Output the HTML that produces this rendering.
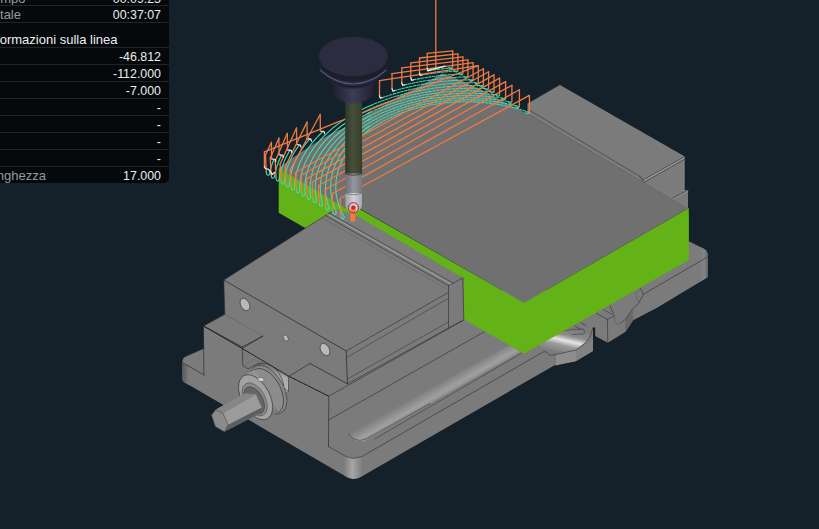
<!DOCTYPE html>
<html lang="it"><head><meta charset="utf-8"><title>Simulazione</title>
<style>
html,body{margin:0;padding:0;background:#14212b;overflow:hidden;}
body{width:819px;height:529px;position:relative;font-family:"Liberation Sans",sans-serif;}
svg{position:absolute;left:0;top:0;}
.panel{position:absolute;left:0;top:0;width:169px;height:183px;background:#05090c;border-bottom-right-radius:5px;overflow:hidden;font-size:12.4px;color:#ececec;}
.row{position:absolute;left:0;width:169px;height:17px;border-top:1px solid #1f2529;box-sizing:border-box;}
.row .l{position:absolute;right:0;top:2px;line-height:14px;color:#9b9b9b;white-space:nowrap;font-size:13px;}
.row .v{position:absolute;right:8px;top:2px;line-height:14px;white-space:nowrap;}
.hd{position:absolute;top:33px;line-height:14px;white-space:nowrap;color:#f0f0f0;font-size:13px;}
</style></head><body>
<svg width="819" height="529" viewBox="0 0 819 529">
<defs>
<linearGradient id="shank" x1="0" x2="1" y1="0" y2="0"><stop offset="0" stop-color="#2f3828"/><stop offset="0.45" stop-color="#465039"/><stop offset="1" stop-color="#353e2c"/></linearGradient>
<linearGradient id="cut1" x1="0" x2="1" y1="0" y2="0"><stop offset="0" stop-color="#6e6e74"/><stop offset="0.5" stop-color="#95959c"/><stop offset="1" stop-color="#77777d"/></linearGradient>
<linearGradient id="cut2" x1="0" x2="1" y1="0" y2="0"><stop offset="0" stop-color="#9a9aa2"/><stop offset="0.5" stop-color="#d0d0d8"/><stop offset="1" stop-color="#a8a8b0"/></linearGradient>
<linearGradient id="neck" x1="0" x2="1" y1="0" y2="0"><stop offset="0" stop-color="#1f2030"/><stop offset="0.5" stop-color="#3c3d58"/><stop offset="1" stop-color="#222334"/></linearGradient>
<linearGradient id="hl" gradientUnits="userSpaceOnUse" x1="425.6" y1="389.8" x2="434.4" y2="405.2"><stop offset="0" stop-color="#7b7b7b"/><stop offset="0.6" stop-color="#a0a0a0"/><stop offset="1" stop-color="#7b7b7b"/></linearGradient>
<linearGradient id="rlobe" x1="0" x2="1" y1="0" y2="0"><stop offset="0" stop-color="#7b7b7b"/><stop offset="0.55" stop-color="#848484"/><stop offset="1" stop-color="#666666"/></linearGradient>
<linearGradient id="lobehl" gradientUnits="userSpaceOnUse" x1="570" y1="328" x2="564" y2="354"><stop offset="0" stop-color="#7b7b7b"/><stop offset="0.3" stop-color="#8c8c8c"/><stop offset="0.5" stop-color="#e6e6e6"/><stop offset="0.7" stop-color="#9a9a9a"/><stop offset="1" stop-color="#7b7b7b"/></linearGradient>
<linearGradient id="recess" gradientUnits="userSpaceOnUse" x1="258" y1="368" x2="290" y2="384"><stop offset="0" stop-color="#6a6a6a"/><stop offset="0.6" stop-color="#a0a0a0"/><stop offset="1" stop-color="#b4b4b4"/></linearGradient>
<linearGradient id="collar" gradientUnits="userSpaceOnUse" x1="250" y1="372" x2="276" y2="416"><stop offset="0" stop-color="#8e8e8e"/><stop offset="0.35" stop-color="#a8a8a8"/><stop offset="0.8" stop-color="#8a8a8a"/><stop offset="1" stop-color="#6e6e6e"/></linearGradient>
<linearGradient id="fcorner" gradientUnits="userSpaceOnUse" x1="344" y1="0" x2="362.5" y2="0"><stop offset="0" stop-color="#7b7b7b"/><stop offset="0.45" stop-color="#a6a6a6"/><stop offset="1" stop-color="#7b7b7b"/></linearGradient>
<linearGradient id="lcorner" gradientUnits="userSpaceOnUse" x1="182.4" y1="0" x2="189" y2="0"><stop offset="0" stop-color="#5a5a5a"/><stop offset="1" stop-color="#7b7b7b"/></linearGradient>
</defs>
<polygon points="590.0,300.0 590.0,327.5 595.2,327.5 595.2,336.1 607.8,342.8 625.3,332.0 633.1,320.3 657.5,307.4 707.7,277.2 707.7,253.6 706.5,250.5 703.2,248.4 688.5,241.0 688.5,215.0 600.0,260.0" fill="#7b7b7b" />
<polygon points="625.3,332.0 633.1,320.3 633.1,309.5 626.3,318.3 625.0,323.0" fill="#696969" />
<path d="M700,247 L703.2,248.4 Q707.7,250.5 707.7,256 L707.7,277.2 L700,281.7 Z" fill="url(#rlobe)" />
<polyline points="707.0,257.3 643.4,294.2 640.5,288.3" fill="none" stroke="#2e2e2e" stroke-width="0.6" stroke-linejoin="round" stroke-linecap="round" />
<polyline points="643.4,294.2 639.0,302.6 632.2,309.5 626.3,318.3 620.9,323.2" fill="none" stroke="#2e2e2e" stroke-width="0.6" stroke-linejoin="round" stroke-linecap="round" />
<polyline points="640.5,288.3 636.0,294.0 637.0,300.0 639.0,302.6" fill="none" stroke="#555" stroke-width="0.5" stroke-linejoin="round" stroke-linecap="round" />
<polyline points="607.4,319.3 607.8,342.8" fill="none" stroke="#2e2e2e" stroke-width="0.6" stroke-linejoin="round" stroke-linecap="round" />
<polyline points="596.3,313.4 607.4,319.3 614.5,315.9 610.0,306.0" fill="none" stroke="#2e2e2e" stroke-width="0.6" stroke-linejoin="round" stroke-linecap="round" />
<polyline points="603.2,309.5 612.5,314.7" fill="none" stroke="#2e2e2e" stroke-width="0.5" stroke-linejoin="round" stroke-linecap="round" />
<polyline points="614.5,315.9 614.8,321.0 617.0,324.5 620.9,323.2" fill="none" stroke="#555" stroke-width="0.5" stroke-linejoin="round" stroke-linecap="round" />
<polygon points="224.8,314.3 203.5,326.0 204.0,348.4 186.5,356.0 183.5,358.0 182.4,361.0 182.4,379.4 183.5,382.0 187.0,383.8 345.0,476.0 349.0,478.0 353.8,478.9 358.5,478.0 362.5,476.0 555.0,365.0 575.0,361.0 586.0,355.0 593.0,350.9 593.0,327.3 593.0,295.0 560.0,290.0 460.0,290.0 330.0,290.0" fill="#7b7b7b" />
<polygon points="555.4,354.6 576.0,350.1 576.0,361.2 555.4,365.6" fill="#8e8e8e" />
<polygon points="576.0,350.1 593.0,340.2 593.0,350.9 576.0,361.2" fill="#828282" />
<path d="M538,343 L560,330 L588,327 L592,333 L586,342 L576,349.5 L556,354 L546,353 Z" fill="url(#lobehl)" />
<polyline points="555.4,354.6 576.0,350.1 584.0,344.0 590.0,337.0 593.0,327.3" fill="none" stroke="#2e2e2e" stroke-width="0.55" stroke-linejoin="round" stroke-linecap="round" />
<polyline points="555.4,354.6 555.4,365.6" fill="none" stroke="#666" stroke-width="0.4" stroke-linejoin="round" stroke-linecap="round" />
<polyline points="563.0,331.0 572.0,329.5 583.0,329.0 585.0,331.5 583.5,334.0 572.0,334.5" fill="none" stroke="#2e2e2e" stroke-width="0.5" stroke-linejoin="round" stroke-linecap="round" />
<polyline points="575.0,326.0 580.0,329.0" fill="none" stroke="#2e2e2e" stroke-width="0.6" stroke-linejoin="round" stroke-linecap="round" />
<polyline points="581.0,322.5 586.0,326.0" fill="none" stroke="#2e2e2e" stroke-width="0.6" stroke-linejoin="round" stroke-linecap="round" />
<path d="M344,455.3 L353,458.6 L362.5,456.3 L362.5,476 L358.5,478 L353.75,478.9 L349,478 L344,475.4 Z" fill="url(#fcorner)" />
<path d="M182.4,361 L183,363 L189,366.3 L189,385 L187,383.8 L183.5,382 L182.4,379.4 Z" fill="url(#lcorner)" />
<polygon points="560.0,85.0 684.4,156.2 684.4,190.0 688.0,190.0 688.0,209.0 527.5,113.5 527.5,103.8" fill="#7b7b7b" />
<polyline points="527.5,103.8 560.0,85.0" fill="none" stroke="#6a6a6a" stroke-width="0.4" stroke-linejoin="round" stroke-linecap="round" />
<polyline points="684.2,157.0 684.2,190.0" fill="none" stroke="#9a9a9a" stroke-width="0.5" stroke-linejoin="round" stroke-linecap="round" />
<polyline points="530.0,110.5 640.0,176.5 643.2,180.0 684.0,157.0" fill="none" stroke="#2e2e2e" stroke-width="0.55" stroke-linejoin="round" stroke-linecap="round" />
<polyline points="643.6,181.1 684.0,158.2" fill="none" stroke="#a8a8a8" stroke-width="0.9" stroke-linejoin="round" stroke-linecap="round" />
<polyline points="640.0,176.5 644.2,182.3 684.0,159.5" fill="none" stroke="#2e2e2e" stroke-width="0.55" stroke-linejoin="round" stroke-linecap="round" />
<polyline points="673.0,198.0 688.0,190.0" fill="none" stroke="#2e2e2e" stroke-width="0.6" stroke-linejoin="round" stroke-linecap="round" />
<polyline points="673.5,199.0 688.0,191.0" fill="none" stroke="#a0a0a0" stroke-width="0.6" stroke-linejoin="round" stroke-linecap="round" />
<polygon points="278.7,168.2 356.0,207.0 524.1,302.7 688.8,208.0 688.8,260.0 523.8,353.8 278.7,212.8" fill="#62b218" />
<polygon points="278.7,168.2 292.7,157.7 311.6,145.2 330.5,133.8 345.0,127.5 400.0,96.0 419.6,86.3 442.2,73.5 458.8,79.4 479.8,89.2 510.4,105.3 527.5,113.5 687.7,208.6 524.1,302.7 360.0,208.8 352.0,210.5 346.0,208.4" fill="#707070" />
<polygon points="223.8,280.0 325.4,215.5 336.0,209.5 356.2,215.5 462.5,277.5 463.8,278.2 463.8,320.0 448.5,328.0 347.5,384.0 224.8,314.3" fill="#7b7b7b" />
<polyline points="224.8,314.3 223.8,280.0 325.4,215.5 335.0,210.0" fill="none" stroke="#2e2e2e" stroke-width="0.6" stroke-linejoin="round" stroke-linecap="round" />
<polyline points="223.8,280.0 346.2,351.0 347.5,383.8" fill="none" stroke="#2e2e2e" stroke-width="0.8" stroke-linejoin="round" stroke-linecap="round" />
<polyline points="346.2,351.0 448.8,292.2" fill="none" stroke="#2e2e2e" stroke-width="0.6" stroke-linejoin="round" stroke-linecap="round" />
<polyline points="347.5,383.8 448.5,328.0" fill="none" stroke="#2e2e2e" stroke-width="0.6" stroke-linejoin="round" stroke-linecap="round" />
<polyline points="347.5,357.0 448.8,298.0" fill="none" stroke="#2e2e2e" stroke-width="0.5" stroke-linejoin="round" stroke-linecap="round" />
<polyline points="347.5,379.0 448.5,322.0" fill="none" stroke="#2e2e2e" stroke-width="0.5" stroke-linejoin="round" stroke-linecap="round" />
<polyline points="448.5,285.8 448.5,328.0" fill="none" stroke="#2e2e2e" stroke-width="0.6" stroke-linejoin="round" stroke-linecap="round" />
<polyline points="448.5,285.8 462.8,277.8 463.8,320.0 449.0,327.5" fill="none" stroke="#2e2e2e" stroke-width="0.6" stroke-linejoin="round" stroke-linecap="round" />
<polyline points="325.4,215.5 448.5,285.8" fill="none" stroke="#2e2e2e" stroke-width="0.6" stroke-linejoin="round" stroke-linecap="round" />
<polyline points="327.5,214.0 451.0,284.0" fill="none" stroke="#bdbdbd" stroke-width="0.6" stroke-linejoin="round" stroke-linecap="round" />
<polyline points="329.0,213.0 453.0,283.0" fill="none" stroke="#2e2e2e" stroke-width="0.5" stroke-linejoin="round" stroke-linecap="round" />
<polyline points="322.0,218.0 446.0,288.5" fill="none" stroke="#5a5a5a" stroke-width="0.4" stroke-linejoin="round" stroke-linecap="round" />
<ellipse cx="245" cy="304.5" rx="4.3" ry="6.6" fill="#b9b9b9" stroke="#2e2e2e" stroke-width="0.6" transform="rotate(-29 245 304.5)" />
<ellipse cx="285.75" cy="338" rx="2.2" ry="3.4" fill="#b9b9b9" stroke="#2e2e2e" stroke-width="0.5" transform="rotate(-29 285.75 338)" />
<ellipse cx="325" cy="349.5" rx="4.3" ry="6.6" fill="#b9b9b9" stroke="#2e2e2e" stroke-width="0.6" transform="rotate(-29 325 349.5)" />
<polyline points="224.8,314.3 203.5,326.0 203.9,375.0" fill="none" stroke="#2e2e2e" stroke-width="0.7" stroke-linejoin="round" stroke-linecap="round" />
<polyline points="203.5,326.0 242.4,347.0 262.7,336.0" fill="none" stroke="#2e2e2e" stroke-width="0.8" stroke-linejoin="round" stroke-linecap="round" />
<polyline points="224.8,314.3 262.7,336.0" fill="none" stroke="#555" stroke-width="0.4" stroke-linejoin="round" stroke-linecap="round" />
<polyline points="242.4,347.0 243.5,365.5 250.0,368.5" fill="none" stroke="#2e2e2e" stroke-width="0.6" stroke-linejoin="round" stroke-linecap="round" />
<polyline points="204.0,348.4 186.5,356.0" fill="none" stroke="#2e2e2e" stroke-width="0.5" stroke-linejoin="round" stroke-linecap="round" />
<polyline points="183.0,363.0 204.0,374.8" fill="none" stroke="#2e2e2e" stroke-width="0.7" stroke-linejoin="round" stroke-linecap="round" />
<polyline points="310.0,363.5 347.5,383.8" fill="none" stroke="#2e2e2e" stroke-width="0.8" stroke-linejoin="round" stroke-linecap="round" />
<polyline points="203.5,326.0 242.0,348.4 289.0,376.3 328.8,396.2" fill="none" stroke="#1c1c1c" stroke-width="1.0" stroke-linejoin="round" stroke-linecap="round" stroke-dasharray="3.2 0.8"/>
<polyline points="242.0,348.4 262.6,336.4" fill="none" stroke="#2e2e2e" stroke-width="0.7" stroke-linejoin="round" stroke-linecap="round" />
<polyline points="289.0,376.3 310.0,363.5" fill="none" stroke="#2e2e2e" stroke-width="0.7" stroke-linejoin="round" stroke-linecap="round" />
<polygon points="242.3,349.5 288.3,376.5 288.6,391.5 270.0,385.0 252.6,366.4 248.2,368.9 242.8,365.5" fill="#7a7a7a" />
<polygon points="252.6,366.4 259.5,361.5 288.3,377.5 288.6,391.5 280.0,392.0 268.0,375.0" fill="url(#recess)" />
<polyline points="242.3,349.5 242.8,365.5 248.2,368.9 252.6,366.4" fill="none" stroke="#2e2e2e" stroke-width="0.6" stroke-linejoin="round" stroke-linecap="round" />
<polyline points="242.8,365.5 254.6,359.0" fill="none" stroke="#666" stroke-width="0.4" stroke-linejoin="round" stroke-linecap="round" />
<path d="M252.6,366.4 Q262,360 272,366 Q281,372 284,386" fill="none" stroke="#2e2e2e" stroke-width="0.6" />
<polyline points="288.3,376.5 288.6,391.5 284.0,388.0" fill="none" stroke="#2e2e2e" stroke-width="0.6" stroke-linejoin="round" stroke-linecap="round" />
<polyline points="328.8,396.2 328.5,446.5" fill="none" stroke="#2e2e2e" stroke-width="0.7" stroke-linejoin="round" stroke-linecap="round" />
<polyline points="328.8,396.2 463.0,320.5" fill="none" stroke="#2e2e2e" stroke-width="0.6" stroke-linejoin="round" stroke-linecap="round" />
<polyline points="328.5,420.0 484.2,331.8" fill="none" stroke="#2e2e2e" stroke-width="0.6" stroke-linejoin="round" stroke-linecap="round" />
<polyline points="328.5,446.5 346.0,456.5 353.0,458.5 362.0,456.5 543.2,351.9 546.0,351.7 550.0,355.4 555.4,354.6" fill="none" stroke="#2e2e2e" stroke-width="0.6" stroke-linejoin="round" stroke-linecap="round" />
<path d="M349,433 Q352,442 364,441.5 L520.5,352 L509,345.4 Z" fill="url(#hl)" />
<polyline points="348.5,433.5 353.0,438.5 360.0,440.5 367.0,438.5 430.0,403.5" fill="none" stroke="#2e2e2e" stroke-width="0.5" stroke-linejoin="round" stroke-linecap="round" />
<polyline points="375.0,438.8 521.1,353.4" fill="none" stroke="#2e2e2e" stroke-width="0.5" stroke-linejoin="round" stroke-linecap="round" />
<ellipse cx="268.3" cy="389.8" rx="15.3" ry="26.5" fill="#868686" stroke="#2e2e2e" stroke-width="0.5" transform="rotate(-29 268.3 389.8)" />
<ellipse cx="266.5" cy="391" rx="14" ry="24.5" fill="#8c8c8c" stroke="#2e2e2e" stroke-width="0.6" transform="rotate(-29 266.5 391)" />
<polygon points="243.7,375.8 254.6,369.6 278.5,412.4 267.6,418.6" fill="url(#collar)" />
<ellipse cx="255.6" cy="397.2" rx="14" ry="24.5" fill="#a2a2a2" stroke="#2e2e2e" stroke-width="0.6" transform="rotate(-29 255.6 397.2)" />
<ellipse cx="254.6" cy="399.4" rx="10.6" ry="18" fill="#8a8a8a" stroke="#444" stroke-width="0.5" transform="rotate(-29 254.6 399.4)" />
<ellipse cx="254.2" cy="400.4" rx="8.6" ry="14.8" fill="#666" stroke="#333" stroke-width="0.5" transform="rotate(-29 254.2 400.4)" />
<polygon points="215.9,409.6 244.7,393.5 256.0,394.5 262.0,412.0 224.4,431.8 215.4,426.6 211.6,415.2" fill="#808080" />
<polygon points="215.9,409.6 244.7,393.5 256.0,394.5 223.0,413.4" fill="#868686" />
<polygon points="223.0,413.4 256.0,394.5 261.7,407.7 228.2,424.7" fill="#9b9b9b" />
<polygon points="228.2,424.7 261.7,407.7 262.0,412.0 224.4,431.8" fill="#5e5e5e" />
<polygon points="211.6,415.2 215.9,409.6 223.0,413.4 228.2,424.7 224.4,431.8 215.4,426.6" fill="#8b8b8b" stroke="#3a3a3a" stroke-width="0.5" stroke-linejoin="round" />
<ellipse cx="260.9" cy="379.5" rx="3.3" ry="2.1" fill="#cfcfcf" stroke="#444" stroke-width="0.5" transform="rotate(8 260.9 379.5)" />
<polyline points="344.2,216.9 343.4,215.5 342.0,212.7 340.7,209.9 339.5,207.0 338.5,204.1 337.7,201.2 337.0,198.3 336.4,195.3 336.0,192.4 335.8,189.4 335.8,186.4 335.9,183.5 336.1,180.5 336.5,177.5 337.1,174.6 337.9,171.7 338.7,168.8 339.8,165.9 341.0,163.0 342.3,160.2 343.8,157.4 345.5,154.6 347.3,151.9 349.2,149.2 351.3,146.6 353.5,144.0 355.9,141.4 358.4,139.0 361.0,136.5 363.8,134.2 366.7,131.9 369.7,129.6" fill="none" stroke="#45dcb0" stroke-width="1.1" stroke-linejoin="round" stroke-linecap="round" />
<polyline points="366.7,131.9 369.7,129.6 372.8,127.5 376.0,125.4 379.4,123.4 382.8,121.4 386.4,119.6 390.0,117.8 393.7,116.1 397.6,114.5 401.5,113.0 405.5,111.6 409.5,110.2 413.7,109.0 417.9,107.8 422.1,106.8 426.4,105.8 430.8,105.0 435.2,104.2 439.6,103.6 444.1,103.0 448.6,102.6 453.1,102.2 457.7,102.0 462.2,101.8 466.8,101.8 471.3,101.8 475.9,102.0 480.4,102.3 484.9,102.7 489.4,103.1 493.9,103.7 498.3,104.4 502.7,105.2 507.1,106.1 511.4,107.0 515.6,108.1 519.8,109.3 523.9,110.5 527.9,111.9 529.4,112.4" fill="none" stroke="#45dcb0" stroke-width="1.1" stroke-linejoin="round" stroke-linecap="round" stroke-dasharray="2.6 1.3" stroke-opacity="0.92"/>
<polyline points="336.3,212.3 335.6,210.8 334.4,207.8 333.4,204.8 332.5,201.8 331.8,198.8 331.3,195.8 330.9,192.7 330.7,189.7 330.7,186.6 330.8,183.6 331.1,180.5 331.5,177.5 332.1,174.5 332.9,171.4 333.9,168.4 335.0,165.5 336.3,162.5 337.7,159.6 339.3,156.7 341.0,153.9 342.9,151.1 344.9,148.3 347.1,145.6 349.5,143.0 352.0,140.4 354.6,137.8 357.3,135.3 360.2,132.9 363.3,130.5 366.4,128.2 369.7,126.0" fill="none" stroke="#45dcb0" stroke-width="1.1" stroke-linejoin="round" stroke-linecap="round" />
<polyline points="366.4,128.2 369.7,126.0 373.1,123.9 376.6,121.8 380.2,119.8 383.9,117.9 387.7,116.1 391.6,114.4 395.6,112.7 399.7,111.2 403.9,109.7 408.2,108.4 412.5,107.1 416.9,105.9 421.3,104.9 425.8,103.9 430.4,103.0 435.0,102.3 439.6,101.6 444.3,101.0 449.0,100.6 453.7,100.2 458.5,100.0 463.2,99.9 468.0,99.8 472.7,99.9 477.5,100.1 482.2,100.4 486.9,100.8 491.6,101.3 496.2,101.9 500.9,102.6 505.4,103.5 510.0,104.4 514.5,105.4 518.9,106.5 519.4,106.7" fill="none" stroke="#45dcb0" stroke-width="1.1" stroke-linejoin="round" stroke-linecap="round" stroke-dasharray="2.6 1.3" stroke-opacity="0.92"/>
<polyline points="329.2,208.2 328.6,206.6 327.7,203.5 326.9,200.4 326.3,197.3 325.9,194.2 325.6,191.0 325.5,187.9 325.6,184.7 325.9,181.6 326.3,178.5 326.9,175.3 327.7,172.2 328.6,169.2 329.7,166.1 331.0,163.1 332.5,160.0 334.1,157.1 335.8,154.1 337.8,151.2 339.9,148.4 342.1,145.6 344.5,142.8 347.1,140.1 349.8,137.5 352.6,134.9 355.6,132.4 358.7,130.0 362.0,127.6 365.4,125.3 368.9,123.1" fill="none" stroke="#45dcb0" stroke-width="1.1" stroke-linejoin="round" stroke-linecap="round" />
<polyline points="368.9,123.1 372.5,120.9 376.2,118.9 380.1,116.9 384.0,115.0 388.1,113.2 392.2,111.5 396.5,109.9 400.8,108.3 405.2,106.9 409.7,105.6 414.3,104.3 418.9,103.2 423.6,102.2 428.3,101.3 433.1,100.5 438.0,99.8 442.8,99.2 447.7,98.7 452.6,98.3 457.6,98.0 462.5,97.8 467.5,97.8 472.4,97.8 477.4,98.0 482.3,98.3 487.2,98.7 492.1,99.2 497.0,99.8 501.8,100.5 506.6,101.3 511.3,102.2 511.9,102.3" fill="none" stroke="#45dcb0" stroke-width="1.1" stroke-linejoin="round" stroke-linecap="round" stroke-dasharray="2.6 1.3" stroke-opacity="0.92"/>
<polyline points="322.6,204.2 322.1,202.6 321.4,199.4 320.9,196.2 320.6,192.9 320.4,189.7 320.4,186.5 320.6,183.2 321.0,180.0 321.5,176.8 322.2,173.6 323.1,170.4 324.2,167.2 325.5,164.1 326.9,161.0 328.5,157.9 330.3,154.9 332.3,151.9 334.4,148.9 336.6,146.0 339.1,143.2 341.7,140.4 344.4,137.6 347.3,135.0 350.3,132.3 353.5,129.8 356.9,127.3 360.3,124.9 363.9,122.6 367.6,120.4 371.5,118.2" fill="none" stroke="#45dcb0" stroke-width="1.1" stroke-linejoin="round" stroke-linecap="round" />
<polyline points="367.6,120.4 371.5,118.2 375.5,116.1 379.5,114.1 383.7,112.2 388.0,110.4 392.4,108.7 396.9,107.1 401.4,105.6 406.1,104.2 410.8,102.9 415.6,101.7 420.4,100.6 425.4,99.6 430.3,98.7 435.3,97.9 440.4,97.3 445.5,96.7 450.6,96.3 455.7,95.9 460.9,95.7 466.0,95.6 471.2,95.6 476.4,95.7 481.5,96.0 486.6,96.3 491.8,96.8 496.8,97.3 501.9,98.0 505.6,98.6" fill="none" stroke="#45dcb0" stroke-width="1.1" stroke-linejoin="round" stroke-linecap="round" stroke-dasharray="2.6 1.3" stroke-opacity="0.92"/>
<polyline points="316.4,200.6 316.1,198.9 315.6,195.6 315.3,192.3 315.2,189.0 315.3,185.7 315.5,182.3 316.0,179.0 316.6,175.7 317.4,172.4 318.4,169.2 319.6,165.9 321.0,162.7 322.5,159.5 324.3,156.4 326.2,153.3 328.3,150.2 330.5,147.2 332.9,144.2 335.5,141.3 338.3,138.4 341.2,135.6 344.2,132.9 347.5,130.2 350.8,127.6 354.3,125.1 358.0,122.7 361.8,120.3 365.7,118.0 369.7,115.8" fill="none" stroke="#45dcb0" stroke-width="1.1" stroke-linejoin="round" stroke-linecap="round" />
<polyline points="369.7,115.8 373.9,113.7 378.2,111.7 382.6,109.8 387.1,108.0 391.6,106.2 396.3,104.6 401.1,103.1 406.0,101.7 410.9,100.4 415.9,99.2 421.0,98.1 426.1,97.1 431.3,96.2 436.6,95.4 441.8,94.8 447.1,94.3 452.5,93.8 457.8,93.5 463.2,93.3 468.6,93.3 474.0,93.3 479.3,93.5 484.7,93.8 490.0,94.1 495.3,94.6 499.6,95.1" fill="none" stroke="#45dcb0" stroke-width="1.1" stroke-linejoin="round" stroke-linecap="round" stroke-dasharray="2.6 1.3" stroke-opacity="0.92"/>
<polyline points="310.6,197.3 310.4,195.6 310.1,192.2 310.0,188.8 310.1,185.3 310.4,181.9 310.9,178.5 311.6,175.1 312.5,171.8 313.5,168.4 314.8,165.1 316.2,161.8 317.9,158.5 319.7,155.3 321.7,152.1 323.9,148.9 326.3,145.8 328.8,142.8 331.5,139.8 334.4,136.9 337.4,134.0 340.7,131.2 344.0,128.5 347.5,125.8 351.2,123.2 355.0,120.7 359.0,118.3 363.1,116.0 367.3,113.7 371.6,111.6" fill="none" stroke="#45dcb0" stroke-width="1.1" stroke-linejoin="round" stroke-linecap="round" />
<polyline points="367.3,113.7 371.6,111.6 376.1,109.5 380.7,107.6 385.4,105.7 390.2,103.9 395.1,102.3 400.1,100.7 405.1,99.3 410.3,98.0 415.5,96.7 420.8,95.6 426.1,94.6 431.5,93.7 437.0,93.0 442.5,92.3 448.0,91.8 453.6,91.4 459.1,91.1 464.7,90.9 470.3,90.8 475.9,90.9 481.5,91.1 487.1,91.4 492.6,91.8 494.0,91.9" fill="none" stroke="#45dcb0" stroke-width="1.1" stroke-linejoin="round" stroke-linecap="round" stroke-dasharray="2.6 1.3" stroke-opacity="0.92"/>
<polyline points="305.1,193.9 304.9,192.2 304.9,188.6 305.0,185.1 305.3,181.6 305.8,178.1 306.5,174.6 307.5,171.2 308.6,167.7 309.9,164.3 311.4,160.9 313.1,157.6 315.0,154.2 317.1,151.0 319.4,147.7 321.9,144.6 324.5,141.4 327.4,138.4 330.4,135.4 333.6,132.4 336.9,129.5 340.4,126.7 344.1,124.0 347.9,121.4 351.9,118.8 356.0,116.3 360.3,113.9 364.7,111.6 369.2,109.4" fill="none" stroke="#45dcb0" stroke-width="1.1" stroke-linejoin="round" stroke-linecap="round" />
<polyline points="369.2,109.4 373.9,107.3 378.6,105.3 383.5,103.4 388.5,101.6 393.6,99.9 398.8,98.3 404.1,96.9 409.4,95.5 414.9,94.2 420.4,93.1 425.9,92.1 431.6,91.2 437.2,90.4 442.9,89.7 448.7,89.2 454.5,88.8 460.3,88.5 466.1,88.3 471.9,88.2 477.7,88.3 483.5,88.5 488.6,88.8" fill="none" stroke="#45dcb0" stroke-width="1.1" stroke-linejoin="round" stroke-linecap="round" stroke-dasharray="2.6 1.3" stroke-opacity="0.92"/>
<polyline points="299.7,190.9 299.7,189.1 299.8,185.5 300.1,181.9 300.6,178.3 301.3,174.7 302.2,171.1 303.4,167.6 304.7,164.1 306.3,160.6 308.0,157.1 310.0,153.7 312.1,150.4 314.5,147.0 317.0,143.8 319.8,140.5 322.7,137.4 325.8,134.3 329.1,131.3 332.5,128.3 336.2,125.4 339.9,122.6 343.9,119.9 348.0,117.2 352.3,114.7 356.7,112.2 361.2,109.9 365.9,107.6 370.8,105.4" fill="none" stroke="#45dcb0" stroke-width="1.1" stroke-linejoin="round" stroke-linecap="round" />
<polyline points="370.8,105.4 375.7,103.3 380.8,101.4 385.9,99.5 391.2,97.7 396.6,96.1 402.1,94.6 407.6,93.1 413.3,91.8 419.0,90.7 424.8,89.6 430.6,88.7 436.5,87.8 442.4,87.1 448.4,86.6 454.4,86.1 460.4,85.8 466.4,85.6 472.5,85.5 478.5,85.6 483.4,85.7" fill="none" stroke="#45dcb0" stroke-width="1.1" stroke-linejoin="round" stroke-linecap="round" stroke-dasharray="2.6 1.3" stroke-opacity="0.92"/>
<polyline points="294.5,187.8 294.5,186.0 294.8,182.3 295.3,178.6 296.0,174.9 296.9,171.2 298.1,167.6 299.4,164.0 301.0,160.4 302.8,156.9 304.8,153.4 307.0,149.9 309.4,146.5 312.0,143.1 314.8,139.8 317.8,136.5 321.0,133.3 322.6,131.8" fill="none" stroke="#45dcb0" stroke-width="1.1" stroke-linejoin="round" stroke-linecap="round" />
<polyline points="382.0,97.7 384.7,96.8 390.2,95.0 395.8,93.3 401.5,91.8 407.3,90.3 413.2,89.0 419.1,87.8 425.1,86.7 431.2,85.8 437.3,85.0 443.5,84.3 449.7,83.7 455.9,83.3 462.2,82.9 468.4,82.8 474.7,82.7 478.3,82.7" fill="none" stroke="#45dcb0" stroke-width="1.1" stroke-linejoin="round" stroke-linecap="round" stroke-dasharray="2.6 1.3" stroke-opacity="0.92"/>
<polyline points="289.4,184.8 289.5,182.9 290.0,179.1 290.6,175.3 291.5,171.5 292.7,167.8 294.0,164.1 295.6,160.4 297.4,156.7 299.4,153.1 301.6,149.6 304.1,146.0 306.7,142.6 309.4,139.4" fill="none" stroke="#45dcb0" stroke-width="1.1" stroke-linejoin="round" stroke-linecap="round" />
<polyline points="394.5,90.6 397.4,89.8 403.4,88.3 409.4,86.9 415.5,85.6 421.7,84.4 428.0,83.4 434.3,82.5 440.7,81.7 447.1,81.0 453.6,80.5 460.1,80.1 466.6,79.9 473.1,79.7" fill="none" stroke="#45dcb0" stroke-width="1.1" stroke-linejoin="round" stroke-linecap="round" stroke-dasharray="2.6 1.3" stroke-opacity="0.92"/>
<polyline points="284.3,181.9 284.6,180.0 285.2,176.1 286.0,172.2 287.1,168.4 288.4,164.6 290.0,160.8 291.8,157.0 293.8,153.3 296.0,149.6 298.4,146.0 298.9,145.3" fill="none" stroke="#45dcb0" stroke-width="1.1" stroke-linejoin="round" stroke-linecap="round" />
<polyline points="404.3,84.9 407.5,84.2 413.8,82.9 420.2,81.7 426.7,80.6 433.3,79.6 439.9,78.8 446.5,78.1 453.2,77.5 459.9,77.1 466.7,76.8 467.9,76.8" fill="none" stroke="#45dcb0" stroke-width="1.1" stroke-linejoin="round" stroke-linecap="round" stroke-dasharray="2.6 1.3" stroke-opacity="0.92"/>
<polyline points="279.4,178.9 279.7,176.9 280.5,172.9 281.5,169.0 282.8,165.0 284.3,161.1 286.1,157.3 288.1,153.4 289.7,150.6" fill="none" stroke="#45dcb0" stroke-width="1.1" stroke-linejoin="round" stroke-linecap="round" />
<polyline points="413.3,79.8 416.6,79.2 423.3,78.0 430.1,76.9 436.9,76.0 443.8,75.2 450.7,74.6 457.6,74.1 462.9,73.8" fill="none" stroke="#45dcb0" stroke-width="1.1" stroke-linejoin="round" stroke-linecap="round" stroke-dasharray="2.6 1.3" stroke-opacity="0.92"/>
<polyline points="274.5,176.1 274.9,174.1 275.8,170.0 277.0,166.0 278.5,162.0 280.2,158.0 281.3,155.5" fill="none" stroke="#45dcb0" stroke-width="1.1" stroke-linejoin="round" stroke-linecap="round" />
<polyline points="422.0,75.0 425.5,74.4 432.5,73.4 439.6,72.5 446.7,71.7 453.9,71.1 457.9,70.8" fill="none" stroke="#45dcb0" stroke-width="1.1" stroke-linejoin="round" stroke-linecap="round" stroke-dasharray="2.6 1.3" stroke-opacity="0.92"/>
<polyline points="269.7,173.1 270.1,171.1 271.2,166.9 272.6,162.8 273.8,159.7" fill="none" stroke="#45dcb0" stroke-width="1.1" stroke-linejoin="round" stroke-linecap="round" />
<polyline points="429.7,70.4 433.3,69.9 440.6,69.0 448.0,68.2 452.7,67.8" fill="none" stroke="#45dcb0" stroke-width="1.1" stroke-linejoin="round" stroke-linecap="round" stroke-dasharray="2.6 1.3" stroke-opacity="0.92"/>
<polyline points="340.0,198.9 340.8,215.9" fill="none" stroke="#f07a42" stroke-width="1.3" stroke-linejoin="round" stroke-linecap="round" />
<polyline points="340.8,215.9 341.4,218.5 342.8,219.1 344.0,217.9 344.2,216.9" fill="none" stroke="#45dcb0" stroke-width="1.05" stroke-linejoin="round" stroke-linecap="round" />
<polyline points="525.4,111.8 527.2,113.6 529.0,113.2" fill="none" stroke="#45dcb0" stroke-width="1.05" stroke-linejoin="round" stroke-linecap="round" />
<polyline points="529.4,111.9 529.4,95.4" fill="none" stroke="#f07a42" stroke-width="1.3" stroke-linejoin="round" stroke-linecap="round" />
<polyline points="529.4,95.4 341.2,197.7 340.0,198.9" fill="none" stroke="#f07a42" stroke-width="1.3" stroke-linejoin="round" stroke-linecap="round" />
<polyline points="332.1,194.3 332.9,211.3" fill="none" stroke="#f07a42" stroke-width="1.3" stroke-linejoin="round" stroke-linecap="round" />
<polyline points="332.9,211.3 333.5,213.9 334.9,214.5 336.1,213.3 336.3,212.3" fill="none" stroke="#45dcb0" stroke-width="1.05" stroke-linejoin="round" stroke-linecap="round" />
<polyline points="515.4,106.1 517.2,107.9 519.0,107.5" fill="none" stroke="#45dcb0" stroke-width="1.05" stroke-linejoin="round" stroke-linecap="round" />
<polyline points="519.4,106.2 519.4,89.7" fill="none" stroke="#f07a42" stroke-width="1.3" stroke-linejoin="round" stroke-linecap="round" />
<polyline points="519.4,89.7 333.3,193.1 332.1,194.3" fill="none" stroke="#f07a42" stroke-width="1.3" stroke-linejoin="round" stroke-linecap="round" />
<polyline points="325.0,190.2 325.8,207.2" fill="none" stroke="#f07a42" stroke-width="1.3" stroke-linejoin="round" stroke-linecap="round" />
<polyline points="325.8,207.2 326.4,209.8 327.8,210.4 329.0,209.2 329.2,208.2" fill="none" stroke="#45dcb0" stroke-width="1.05" stroke-linejoin="round" stroke-linecap="round" />
<polyline points="507.9,101.7 509.7,103.5 511.5,103.1" fill="none" stroke="#45dcb0" stroke-width="1.05" stroke-linejoin="round" stroke-linecap="round" />
<polyline points="511.9,101.8 511.9,85.3" fill="none" stroke="#f07a42" stroke-width="1.3" stroke-linejoin="round" stroke-linecap="round" />
<polyline points="511.9,85.3 326.2,189.0 325.0,190.2" fill="none" stroke="#f07a42" stroke-width="1.3" stroke-linejoin="round" stroke-linecap="round" />
<polyline points="318.4,186.2 319.2,203.2" fill="none" stroke="#f07a42" stroke-width="1.3" stroke-linejoin="round" stroke-linecap="round" />
<polyline points="319.2,203.2 319.8,205.8 321.2,206.4 322.4,205.2 322.6,204.2" fill="none" stroke="#45dcb0" stroke-width="1.05" stroke-linejoin="round" stroke-linecap="round" />
<polyline points="501.6,98.0 503.4,99.8 505.2,99.4" fill="none" stroke="#45dcb0" stroke-width="1.05" stroke-linejoin="round" stroke-linecap="round" />
<polyline points="505.6,98.1 505.6,81.6" fill="none" stroke="#f07a42" stroke-width="1.3" stroke-linejoin="round" stroke-linecap="round" />
<polyline points="505.6,81.6 319.6,185.0 318.4,186.2" fill="none" stroke="#f07a42" stroke-width="1.3" stroke-linejoin="round" stroke-linecap="round" />
<polyline points="312.2,182.6 313.0,199.6" fill="none" stroke="#f07a42" stroke-width="1.3" stroke-linejoin="round" stroke-linecap="round" />
<polyline points="313.0,199.6 313.6,202.2 315.0,202.8 316.2,201.6 316.4,200.6" fill="none" stroke="#45dcb0" stroke-width="1.05" stroke-linejoin="round" stroke-linecap="round" />
<polyline points="495.6,94.5 497.4,96.3 499.2,95.9" fill="none" stroke="#45dcb0" stroke-width="1.05" stroke-linejoin="round" stroke-linecap="round" />
<polyline points="499.6,94.6 499.6,78.1" fill="none" stroke="#f07a42" stroke-width="1.3" stroke-linejoin="round" stroke-linecap="round" />
<polyline points="499.6,78.1 313.4,181.4 312.2,182.6" fill="none" stroke="#f07a42" stroke-width="1.3" stroke-linejoin="round" stroke-linecap="round" />
<polyline points="306.4,179.3 307.2,196.3" fill="none" stroke="#f07a42" stroke-width="1.3" stroke-linejoin="round" stroke-linecap="round" />
<polyline points="307.2,196.3 307.8,198.9 309.2,199.5 310.4,198.3 310.6,197.3" fill="none" stroke="#45dcb0" stroke-width="1.05" stroke-linejoin="round" stroke-linecap="round" />
<polyline points="490.0,91.3 491.8,93.1 493.6,92.7" fill="none" stroke="#45dcb0" stroke-width="1.05" stroke-linejoin="round" stroke-linecap="round" />
<polyline points="494.0,91.4 494.0,74.9" fill="none" stroke="#f07a42" stroke-width="1.3" stroke-linejoin="round" stroke-linecap="round" />
<polyline points="494.0,74.9 307.6,178.1 306.4,179.3" fill="none" stroke="#f07a42" stroke-width="1.3" stroke-linejoin="round" stroke-linecap="round" />
<polyline points="300.9,175.9 301.7,192.9" fill="none" stroke="#f07a42" stroke-width="1.3" stroke-linejoin="round" stroke-linecap="round" />
<polyline points="301.7,192.9 302.3,195.5 303.7,196.1 304.9,194.9 305.1,193.9" fill="none" stroke="#45dcb0" stroke-width="1.05" stroke-linejoin="round" stroke-linecap="round" />
<polyline points="484.6,88.2 486.4,90.0 488.2,89.6" fill="none" stroke="#45dcb0" stroke-width="1.05" stroke-linejoin="round" stroke-linecap="round" />
<polyline points="488.6,88.3 488.6,71.8" fill="none" stroke="#f07a42" stroke-width="1.3" stroke-linejoin="round" stroke-linecap="round" />
<polyline points="488.6,71.8 302.1,174.7 300.9,175.9" fill="none" stroke="#f07a42" stroke-width="1.3" stroke-linejoin="round" stroke-linecap="round" />
<polyline points="295.5,172.9 296.3,189.9" fill="none" stroke="#f07a42" stroke-width="1.3" stroke-linejoin="round" stroke-linecap="round" />
<polyline points="296.3,189.9 296.9,192.5 298.3,193.1 299.5,191.9 299.7,190.9" fill="none" stroke="#45dcb0" stroke-width="1.05" stroke-linejoin="round" stroke-linecap="round" />
<polyline points="479.4,85.1 481.2,86.9 483.0,86.5" fill="none" stroke="#45dcb0" stroke-width="1.05" stroke-linejoin="round" stroke-linecap="round" />
<polyline points="483.4,85.2 483.4,68.7" fill="none" stroke="#f07a42" stroke-width="1.3" stroke-linejoin="round" stroke-linecap="round" />
<polyline points="483.4,68.7 296.7,171.7 295.5,172.9" fill="none" stroke="#f07a42" stroke-width="1.3" stroke-linejoin="round" stroke-linecap="round" />
<polyline points="379.5,80.7 379.5,95.7" fill="none" stroke="#f07a42" stroke-width="1.3" stroke-linejoin="round" stroke-linecap="round" />
<polyline points="379.5,95.7 380.3,98.2 382.0,97.7" fill="none" stroke="#f0f0f0" stroke-width="1.2" stroke-linejoin="round" stroke-linecap="round" />
<polyline points="474.3,82.1 476.1,83.9 477.9,83.5" fill="none" stroke="#45dcb0" stroke-width="1.05" stroke-linejoin="round" stroke-linecap="round" />
<polyline points="478.3,82.2 478.3,65.7" fill="none" stroke="#f07a42" stroke-width="1.3" stroke-linejoin="round" stroke-linecap="round" />
<polyline points="379.5,80.7 478.3,65.7" fill="none" stroke="#f07a42" stroke-width="1.3" stroke-linejoin="round" stroke-linecap="round" />
<polyline points="392.0,73.6 392.0,88.6" fill="none" stroke="#f07a42" stroke-width="1.3" stroke-linejoin="round" stroke-linecap="round" />
<polyline points="392.0,88.6 392.8,91.1 394.5,90.6" fill="none" stroke="#f0f0f0" stroke-width="1.2" stroke-linejoin="round" stroke-linecap="round" />
<polyline points="469.1,79.1 470.9,80.9 472.7,80.5" fill="none" stroke="#45dcb0" stroke-width="1.05" stroke-linejoin="round" stroke-linecap="round" />
<polyline points="473.1,79.2 473.1,62.7" fill="none" stroke="#f07a42" stroke-width="1.3" stroke-linejoin="round" stroke-linecap="round" />
<polyline points="392.0,73.6 473.1,62.7" fill="none" stroke="#f07a42" stroke-width="1.3" stroke-linejoin="round" stroke-linecap="round" />
<polyline points="401.8,67.9 401.8,82.9" fill="none" stroke="#f07a42" stroke-width="1.3" stroke-linejoin="round" stroke-linecap="round" />
<polyline points="401.8,82.9 402.6,85.4 404.3,84.9" fill="none" stroke="#f0f0f0" stroke-width="1.2" stroke-linejoin="round" stroke-linecap="round" />
<polyline points="463.9,76.2 465.7,78.0 467.5,77.6" fill="none" stroke="#45dcb0" stroke-width="1.05" stroke-linejoin="round" stroke-linecap="round" />
<polyline points="467.9,76.3 467.9,59.8" fill="none" stroke="#f07a42" stroke-width="1.3" stroke-linejoin="round" stroke-linecap="round" />
<polyline points="401.8,67.9 467.9,59.8" fill="none" stroke="#f07a42" stroke-width="1.3" stroke-linejoin="round" stroke-linecap="round" />
<polyline points="410.8,62.8 410.8,77.8" fill="none" stroke="#f07a42" stroke-width="1.3" stroke-linejoin="round" stroke-linecap="round" />
<polyline points="410.8,77.8 411.6,80.3 413.3,79.8" fill="none" stroke="#f0f0f0" stroke-width="1.2" stroke-linejoin="round" stroke-linecap="round" />
<polyline points="458.9,73.2 460.7,75.0 462.5,74.6" fill="none" stroke="#45dcb0" stroke-width="1.05" stroke-linejoin="round" stroke-linecap="round" />
<polyline points="462.9,73.3 462.9,56.8" fill="none" stroke="#f07a42" stroke-width="1.3" stroke-linejoin="round" stroke-linecap="round" />
<polyline points="410.8,62.8 462.9,56.8" fill="none" stroke="#f07a42" stroke-width="1.3" stroke-linejoin="round" stroke-linecap="round" />
<polyline points="419.5,58.0 419.5,73.0" fill="none" stroke="#f07a42" stroke-width="1.3" stroke-linejoin="round" stroke-linecap="round" />
<polyline points="419.5,73.0 420.3,75.5 422.0,75.0" fill="none" stroke="#f0f0f0" stroke-width="1.2" stroke-linejoin="round" stroke-linecap="round" />
<polyline points="453.9,70.2 455.7,72.0 457.5,71.6" fill="none" stroke="#45dcb0" stroke-width="1.05" stroke-linejoin="round" stroke-linecap="round" />
<polyline points="457.9,70.3 457.9,53.8" fill="none" stroke="#f07a42" stroke-width="1.3" stroke-linejoin="round" stroke-linecap="round" />
<polyline points="419.5,58.0 457.9,53.8" fill="none" stroke="#f07a42" stroke-width="1.3" stroke-linejoin="round" stroke-linecap="round" />
<polyline points="427.2,53.4 427.2,68.4" fill="none" stroke="#f07a42" stroke-width="1.3" stroke-linejoin="round" stroke-linecap="round" />
<polyline points="427.2,68.4 428.0,70.9 429.7,70.4" fill="none" stroke="#f0f0f0" stroke-width="1.2" stroke-linejoin="round" stroke-linecap="round" />
<polyline points="448.7,67.2 450.5,69.0 452.3,68.6" fill="none" stroke="#45dcb0" stroke-width="1.05" stroke-linejoin="round" stroke-linecap="round" />
<polyline points="452.7,67.3 452.7,50.8" fill="none" stroke="#f07a42" stroke-width="1.3" stroke-linejoin="round" stroke-linecap="round" />
<polyline points="427.2,53.4 452.7,50.8" fill="none" stroke="#f07a42" stroke-width="1.3" stroke-linejoin="round" stroke-linecap="round" />
<polyline points="290.3,169.8 291.1,186.8" fill="none" stroke="#f07a42" stroke-width="1.3" stroke-linejoin="round" stroke-linecap="round" />
<polyline points="291.1,186.8 291.7,189.4 293.1,190.0 294.3,188.8 294.5,187.8" fill="none" stroke="#45dcb0" stroke-width="1.05" stroke-linejoin="round" stroke-linecap="round" />
<polyline points="320.4,131.0 324.1,131.6 324.6,133.6" fill="none" stroke="#f0f0f0" stroke-width="1.2" stroke-linejoin="round" stroke-linecap="round" />
<polyline points="320.4,131.0 320.2,114.5" fill="none" stroke="#f07a42" stroke-width="1.3" stroke-linejoin="round" stroke-linecap="round" />
<polyline points="320.2,114.5 290.3,169.8" fill="none" stroke="#f07a42" stroke-width="1.3" stroke-linejoin="round" stroke-linecap="round" />
<polyline points="285.2,166.8 286.0,183.8" fill="none" stroke="#f07a42" stroke-width="1.3" stroke-linejoin="round" stroke-linecap="round" />
<polyline points="286.0,183.8 286.6,186.4 288.0,187.0 289.2,185.8 289.4,184.8" fill="none" stroke="#45dcb0" stroke-width="1.05" stroke-linejoin="round" stroke-linecap="round" />
<polyline points="307.2,138.6 310.9,139.2 311.4,141.2" fill="none" stroke="#f0f0f0" stroke-width="1.2" stroke-linejoin="round" stroke-linecap="round" />
<polyline points="307.2,138.6 307.0,122.1" fill="none" stroke="#f07a42" stroke-width="1.3" stroke-linejoin="round" stroke-linecap="round" />
<polyline points="307.0,122.1 285.2,166.8" fill="none" stroke="#f07a42" stroke-width="1.3" stroke-linejoin="round" stroke-linecap="round" />
<polyline points="280.1,163.9 280.9,180.9" fill="none" stroke="#f07a42" stroke-width="1.3" stroke-linejoin="round" stroke-linecap="round" />
<polyline points="280.9,180.9 281.5,183.5 282.9,184.1 284.1,182.9 284.3,181.9" fill="none" stroke="#45dcb0" stroke-width="1.05" stroke-linejoin="round" stroke-linecap="round" />
<polyline points="296.7,144.5 300.4,145.1 300.9,147.1" fill="none" stroke="#f0f0f0" stroke-width="1.2" stroke-linejoin="round" stroke-linecap="round" />
<polyline points="296.7,144.5 296.5,128.0" fill="none" stroke="#f07a42" stroke-width="1.3" stroke-linejoin="round" stroke-linecap="round" />
<polyline points="296.5,128.0 280.1,163.9" fill="none" stroke="#f07a42" stroke-width="1.3" stroke-linejoin="round" stroke-linecap="round" />
<polyline points="275.2,160.9 276.0,177.9" fill="none" stroke="#f07a42" stroke-width="1.3" stroke-linejoin="round" stroke-linecap="round" />
<polyline points="276.0,177.9 276.6,180.5 278.0,181.1 279.2,179.9 279.4,178.9" fill="none" stroke="#45dcb0" stroke-width="1.05" stroke-linejoin="round" stroke-linecap="round" />
<polyline points="287.5,149.8 291.2,150.4 291.7,152.4" fill="none" stroke="#f0f0f0" stroke-width="1.2" stroke-linejoin="round" stroke-linecap="round" />
<polyline points="287.5,149.8 287.3,133.3" fill="none" stroke="#f07a42" stroke-width="1.3" stroke-linejoin="round" stroke-linecap="round" />
<polyline points="287.3,133.3 275.2,160.9" fill="none" stroke="#f07a42" stroke-width="1.3" stroke-linejoin="round" stroke-linecap="round" />
<polyline points="270.3,158.1 271.1,175.1" fill="none" stroke="#f07a42" stroke-width="1.3" stroke-linejoin="round" stroke-linecap="round" />
<polyline points="271.1,175.1 271.7,177.7 273.1,178.3 274.3,177.1 274.5,176.1" fill="none" stroke="#45dcb0" stroke-width="1.05" stroke-linejoin="round" stroke-linecap="round" />
<polyline points="279.1,154.7 282.8,155.3 283.3,157.3" fill="none" stroke="#f0f0f0" stroke-width="1.2" stroke-linejoin="round" stroke-linecap="round" />
<polyline points="279.1,154.7 278.9,138.2" fill="none" stroke="#f07a42" stroke-width="1.3" stroke-linejoin="round" stroke-linecap="round" />
<polyline points="278.9,138.2 270.3,158.1" fill="none" stroke="#f07a42" stroke-width="1.3" stroke-linejoin="round" stroke-linecap="round" />
<polyline points="265.5,155.1 266.3,172.1" fill="none" stroke="#f07a42" stroke-width="1.3" stroke-linejoin="round" stroke-linecap="round" />
<polyline points="266.3,172.1 266.9,174.7 268.3,175.3 269.5,174.1 269.7,173.1" fill="none" stroke="#45dcb0" stroke-width="1.05" stroke-linejoin="round" stroke-linecap="round" />
<polyline points="271.6,158.9 275.3,159.5 275.8,161.5" fill="none" stroke="#f0f0f0" stroke-width="1.2" stroke-linejoin="round" stroke-linecap="round" />
<polyline points="271.6,158.9 271.4,142.4" fill="none" stroke="#f07a42" stroke-width="1.3" stroke-linejoin="round" stroke-linecap="round" />
<polyline points="271.4,142.4 265.5,155.1" fill="none" stroke="#f07a42" stroke-width="1.3" stroke-linejoin="round" stroke-linecap="round" />
<polyline points="264.4,151.8 264.4,166.5" fill="none" stroke="#f07a42" stroke-width="1.3" stroke-linejoin="round" stroke-linecap="round" />
<polyline points="264.4,166.5 265.5,168.6 268.0,169.0 270.5,171.5 272.0,174.5 274.5,172.5" fill="none" stroke="#f0f0f0" stroke-width="1.2" stroke-linejoin="round" stroke-linecap="round" />
<polyline points="264.4,151.8 338.0,121.8 362.1,113.1 445.0,78.5 478.3,65.7" fill="none" stroke="#f07a42" stroke-width="1.3" stroke-linejoin="round" stroke-linecap="round" />
<polyline points="435.8,0.0 435.8,66.7" fill="none" stroke="#f07a42" stroke-width="1.3" stroke-linejoin="round" stroke-linecap="round" />
<polyline points="427.5,70.6 445.1,66.2" fill="none" stroke="#f0f0f0" stroke-width="1.2" stroke-linejoin="round" stroke-linecap="round" />
<path d="M345.3,192 L345.3,205 Q346,211.5 353.6,212.8 Q361.3,211.5 362,205 L362,192 Z" fill="url(#cut2)" />
<polygon points="345.2,173.0 362.1,173.0 362.1,193.0 345.2,193.0" fill="url(#cut1)" />
<path d="M345.2,193 Q353.6,196.5 362.1,193" fill="none" stroke="#55555a" stroke-width="0.6" />
<polygon points="345.2,100.0 362.1,100.0 362.1,173.5 345.2,173.5" fill="url(#shank)" />
<path d="M345.2,173.5 Q353.6,177 362.1,173.5" fill="none" stroke="#22281c" stroke-width="0.7" />
<path d="M333.7,84 L333.7,94 Q336,101 353.2,104 Q370.5,101 372.7,94 L372.7,84 Z" fill="url(#neck)" />
<path d="M318.4,62 L319.5,68 Q325,76 333.7,85.5 Q353,92 372.7,85.5 Q381.5,76 387,68 L388,62 Z" fill="#25263b" />
<path d="M320,70 Q353,98 386.5,70" fill="none" stroke="#6a6b90" stroke-width="1.2" opacity="0.7"/>
<path d="M326,78 Q353,96 381,78" fill="none" stroke="#15161f" stroke-width="0.8" />
<ellipse cx="353.3" cy="61" rx="34.8" ry="20" fill="#1d1e2c" />
<ellipse cx="353.3" cy="56.5" rx="34.8" ry="20.2" fill="#2b2c40" stroke="#1a1b28" stroke-width="0.6" />
<rect x="350.4" y="208" width="5" height="13.6" fill="#f5793e"/>
<circle cx="353.4" cy="207.8" r="5.2" fill="none" stroke="#b82222" stroke-width="1"/>
<circle cx="353.4" cy="207.6" r="2.1" fill="#c42a24"/>
</svg>
<div class="panel">
<div class="row" style="top:-10.5px;border-top:none"><span class="l" style="right:143.5px">Tempo</span><span class="v">00:09:25</span></div>
<div class="row" style="top:5px"><span class="l" style="right:148px">Totale</span><span class="v">00:37:07</span></div>
<div class="row" style="top:22px;height:25px"></div>
<div class="hd" style="right:51.5px"><span style="color:transparent">Inf</span>ormazioni sulla linea</div>
<div class="row" style="top:47px"><span class="v">-46.812</span></div>
<div class="row" style="top:64px"><span class="v">-112.000</span></div>
<div class="row" style="top:81px"><span class="v">-7.000</span></div>
<div class="row" style="top:98px"><span class="v">-</span></div>
<div class="row" style="top:115px"><span class="v">-</span></div>
<div class="row" style="top:132px"><span class="v">-</span></div>
<div class="row" style="top:149px"><span class="v">-</span></div>
<div class="row" style="top:166px"><span class="l" style="right:123px">Lunghezza</span><span class="v">17.000</span></div>
</div>
</body></html>
